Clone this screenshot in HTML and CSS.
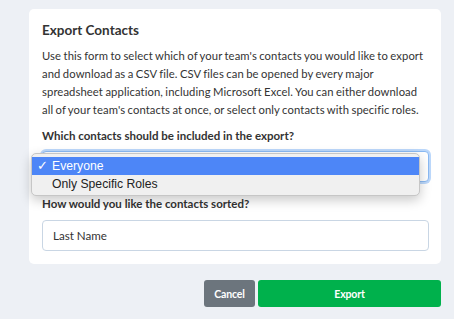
FILE: index.html
```html
<!DOCTYPE html>
<html lang="en">
<head>
<meta charset="utf-8">
<title>Export Contacts</title>
<link rel="stylesheet" href="styles.css">
</head>
<body>
<div class="page">
  <div class="card">
    <h2 class="title">Export Contacts</h2>
    <p class="desc">Use this form to select which of your team's contacts you would like to export and download as a CSV file. CSV files can be opened by every major spreadsheet application, including Microsoft Excel. You can either download all of your team's contacts at once, or select only contacts with specific roles.</p>
    <label class="label">Which contacts should be included in the export?</label>
    <div class="field-wrap">
      <div class="select focused" aria-label="Everyone"></div>
      <ul class="popup">
        <li class="opt active"><span class="check">✓</span>Everyone</li>
        <li class="opt"><span class="check"></span>Only Specific Roles</li>
      </ul>
    </div>
    <label class="label label-second">How would you like the contacts sorted?</label>
    <div class="select input">Last Name</div>
  </div>
  <div class="actions">
    <button class="btn btn-cancel">Cancel</button>
    <button class="btn btn-export">Export</button>
  </div>
</div>
</body>
</html>
```
FILE: styles.css
```css
html, body {
  margin: 0;
  padding: 0;
  background: #edf0f5;
}
body {
  font-family: Lato, "Open Sans", sans-serif;
  color: #333;
}
.page {
  padding: 9px 13px 0 29px;
}
.card {
  background: #fff;
  border-radius: 5px;
  padding: 10px 12px 13px 13px;
}
.title {
  margin: 0 0 6px;
  font-size: 13.5px;
  line-height: 22px;
  font-weight: 700;
  color: #333;
}
.desc {
  margin: 0;
  max-width: 386px;
  font-size: 11.25px;
  line-height: 18px;
  letter-spacing: 0.1px;
  word-spacing: -0.6px;
  color: #333;
}
.label {
  display: block;
  margin-top: 8px;
  font-size: 11.5px;
  line-height: 18px;
  font-weight: 700;
  color: #333;
}
.label-second {
  margin-top: 13px;
}
.field-wrap {
  position: relative;
  margin-top: 6px;
}
.select {
  box-sizing: border-box;
  height: 31px;
  border: 1px solid #c9d6e4;
  border-radius: 4px;
  padding: 0 10px;
  font-size: 11.6px;
  line-height: 29px;
  background: #fff;
  color: #333;
}
.input {
  margin-top: 7px;
}
.select.focused {
  border-color: #8bbaf3;
  box-shadow: 0 0 0 2px #bcd8fb;
}
.popup {
  position: absolute;
  left: -11px;
  top: 2px;
  width: 389px;
  box-sizing: border-box;
  margin: 0;
  padding: 3px 0 2px;
  list-style: none;
  background: #f0f0f0;
  border: 1px solid #c6c6c6;
  border-radius: 5px;
  box-shadow: 0 4px 12px rgba(0, 0, 0, 0.22);
  font-family: "Liberation Sans", Arial, sans-serif;
  font-size: 12.2px;
  color: #222;
}
.opt {
  height: 18px;
  line-height: 18px;
  display: flex;
  align-items: center;
}
.opt.active {
  background: #4d86f7;
  color: #fff;
}
.check {
  width: 20px;
  padding-left: 5px;
  box-sizing: border-box;
  font-family: "DejaVu Sans", sans-serif;
  font-size: 13px;
}
.actions {
  display: flex;
  justify-content: flex-end;
  gap: 3px;
  margin-top: 16px;
}
.btn {
  height: 27px;
  border: none;
  border-radius: 3px;
  font-family: Lato, "Open Sans", sans-serif;
  font-size: 10.5px;
  letter-spacing: -0.15px;
  font-weight: 700;
  color: #fff;
  padding: 0;
}
.btn-cancel {
  width: 51px;
  background: #6c757d;
}
.btn-export {
  width: 183px;
  background: #00b14c;
}
```
